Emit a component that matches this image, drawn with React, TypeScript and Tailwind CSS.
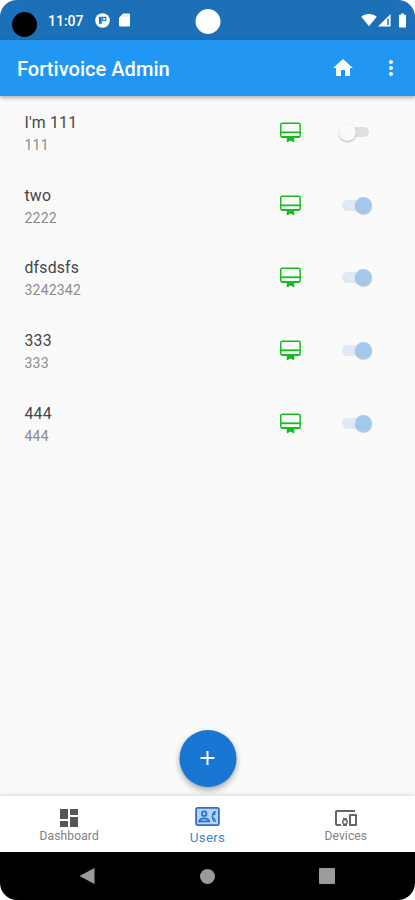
import {
  MdAdd,
  MdBatteryFull,
  MdDashboard,
  MdDevicesOther,
  MdHome,
  MdMoreVert,
  MdSignalWifi4Bar,
} from "react-icons/md";

type User = {
  name: string;
  extension: string;
  enabled: boolean;
};

const users: User[] = [
  { name: "I'm 111", extension: "111", enabled: false },
  { name: "two", extension: "2222", enabled: true },
  { name: "dfsdsfs", extension: "3242342", enabled: true },
  { name: "333", extension: "333", enabled: true },
  { name: "444", extension: "444", enabled: true },
];

const StatusBar = () => (
  <div className="relative flex h-[39.5px] items-center bg-[#1b70b7] pl-3 pr-[4px] text-white">
    <span className="mt-[9px] size-[25px] rounded-full bg-black" />
    <span className="ml-[11px] mt-[2px] text-[14px] font-medium leading-none">11:07</span>
    {/* app notification */}
    <svg viewBox="0 0 16 16" className="ml-[11px] mt-[1px] size-[15px]">
      <circle cx="8" cy="8" r="7.8" fill="white" />
      <path d="M4.200 4h3v7.500h-3z" fill="#1b70b7" />
      <path d="M8.200 4.700h3.300v3.300H8.200z" fill="none" stroke="#1b70b7" strokeWidth="1.300" />
    </svg>
    <svg viewBox="0 0 12 14" className="ml-[9px] mt-[1px] h-[14px] w-[11px]">
      <path d="M4.500 0H11a1 1 0 0 1 1 1v12a1 1 0 0 1-1 1H1a1 1 0 0 1-1-1V4.500z" fill="white" />
      <path d="M5 1.500v2M7.200 1.500v2M9.400 1.500v2" stroke="#a9cbe8" strokeWidth="0.800" />
    </svg>
    <span className="absolute left-1/2 top-[9px] size-[25px] -translate-x-1/2 rounded-full bg-white" />
    <div className="ml-auto mt-[1px] flex items-center">
      <MdSignalWifi4Bar className="size-4" />
      <svg viewBox="0 0 14 14" className="ml-px size-[13px]">
        <path d="M13.500 0v13.500H0z" fill="white" />
        <path d="M10.800 5v7" stroke="#1b70b7" strokeWidth="1.600" />
      </svg>
      <MdBatteryFull className="ml-[3px] size-[17px]" />
    </div>
  </div>
);

const AppBar = () => (
  <header className="relative flex h-[56.5px] items-center bg-[#2196f3] pl-[17px] text-white shadow-[0_2px_4px_rgba(0,0,0,0.3)]">
    <h1 className="mt-[3px] flex-1 text-[20.1px] font-medium">Fortivoice Admin</h1>
    <MdHome className="mr-[24px] size-6" />
    <MdMoreVert className="mr-3 size-6" />
  </header>
);

const MembershipIcon = () => (
  <svg viewBox="0 0 21 21" className="mr-[41px] size-[21px]" fill="none" stroke="#12bd1b">
    <rect x="0.800" y="1.200" width="19.400" height="14" rx="1.600" strokeWidth="1.500" />
    <path d="M1 10.300h19" strokeWidth="1.800" />
    <path d="M1.500 15h18" strokeWidth="1.900" />
    <path d="M6.800 15h7.400v5.500l-3.700-1.900-3.700 1.900z" fill="#12bd1b" stroke="none" />
  </svg>
);

const Toggle = ({ on }: { on: boolean }) =>
  on ? (
    <span className="flex h-[18px] w-[30px] items-center">
      <span className="h-[11px] w-5 rounded-full bg-[#dfe9f6]" />
      <span className="-ml-[7px] size-[17px] shrink-0 rounded-full bg-[#a4c8eb] shadow-[0_1px_1px_rgba(0,0,0,0.2)]" />
    </span>
  ) : (
    <span className="-ml-[3px] mr-[3px] flex h-[18px] w-[30px] items-center">
      <span className="relative size-[17px] shrink-0 rounded-full bg-[#fafafa] shadow-[0_1px_2px_rgba(0,0,0,0.3)]" />
      <span className="-ml-[7px] h-[10px] w-5 rounded-full bg-[#e0e0e0]" />
    </span>
  );

const UserRow = ({ user }: { user: User }) => (
  <li className="flex h-[72.8px] items-center pl-[24.5px] pr-[43px]">
    <div className="flex-1 pt-[3px]">
      <p className="text-[15.8px] leading-[22px] tracking-[0.2px] text-[#454545]">{user.name}</p>
      <p className="text-[14px] leading-[22px] tracking-[0.2px] text-[#8a8a8a]">{user.extension}</p>
    </div>
    <MembershipIcon />
    <Toggle on={user.enabled} />
  </li>
);

const UsersIcon = () => (
  <svg viewBox="0 0 26 20" className="h-[19px] w-[25px]" fill="none" stroke="#2b70c9" strokeWidth="1.900">
    <rect x="1" y="1" width="24" height="18" rx="1.500" fill="#b4d4f8" />
    <circle cx="9.500" cy="7" r="2.400" />
    <path d="M4.200 15.200c1-4.200 9.600-4.200 10.600 0z" />
    <path d="M22 5.200h-2c-2.200 3-2.200 6.600 0 9.600h2M19 6l2 2M19 14l2-2" strokeWidth="1.600" />
  </svg>
);

const BottomTabs = () => (
  <nav className="grid h-[56px] grid-cols-3 bg-white text-[12px] leading-[14px] text-[#808080] shadow-[0_-1px_4px_rgba(0,0,0,0.14)]">
    <div className="flex flex-col items-center pt-[10px]">
      <MdDashboard className="size-6 text-[#555]" />
      <span className="-mt-px tracking-[0.15px]">Dashboard</span>
    </div>
    <div className="flex flex-col items-center pt-[11px] text-[#2b70c9]">
      <UsersIcon />
      <span className="mt-[4px] text-[13.5px] tracking-[0.2px] text-[#4a83d6]">Users</span>
    </div>
    <div className="flex flex-col items-center pt-[10px]">
      <MdDevicesOther className="size-6 text-[#666]" />
      <span className="-mt-px tracking-[0.15px]">Devices</span>
    </div>
  </nav>
);

const SystemNav = () => (
  <div className="grid h-12 grid-cols-3 items-center bg-black">
    <svg viewBox="0 0 16 18" className="ml-[79px] h-[18px] w-4">
      <path d="M15.500 1v16L0.500 9z" fill="#9b9b9b" />
    </svg>
    <span className="size-[15px] justify-self-center rounded-full bg-[#9b9b9b]" />
    <span className="ml-[42.5px] size-4 rounded-[1px] bg-[#9b9b9b]" />
  </div>
);

export default function App() {
  return (
    <div className="h-[900px] w-[415px] bg-white">
      <div className="flex h-full flex-col overflow-hidden rounded-[17px] bg-[#fafafa] font-[Roboto,sans-serif]">
        <StatusBar />
        <AppBar />
        <main className="relative flex-1">
          <ul>
            {users.map((user) => (
              <UserRow key={user.name} user={user} />
            ))}
          </ul>
          <button
            aria-label="Add user"
            className="absolute bottom-[9.5px] left-1/2 flex size-[57px] -translate-x-1/2 items-center justify-center rounded-full bg-[#1976d2] text-white shadow-[0_3px_6px_rgba(0,0,0,0.35)]"
          >
            <MdAdd className="size-6" />
          </button>
        </main>
        <BottomTabs />
        <SystemNav />
      </div>
    </div>
  );
}
